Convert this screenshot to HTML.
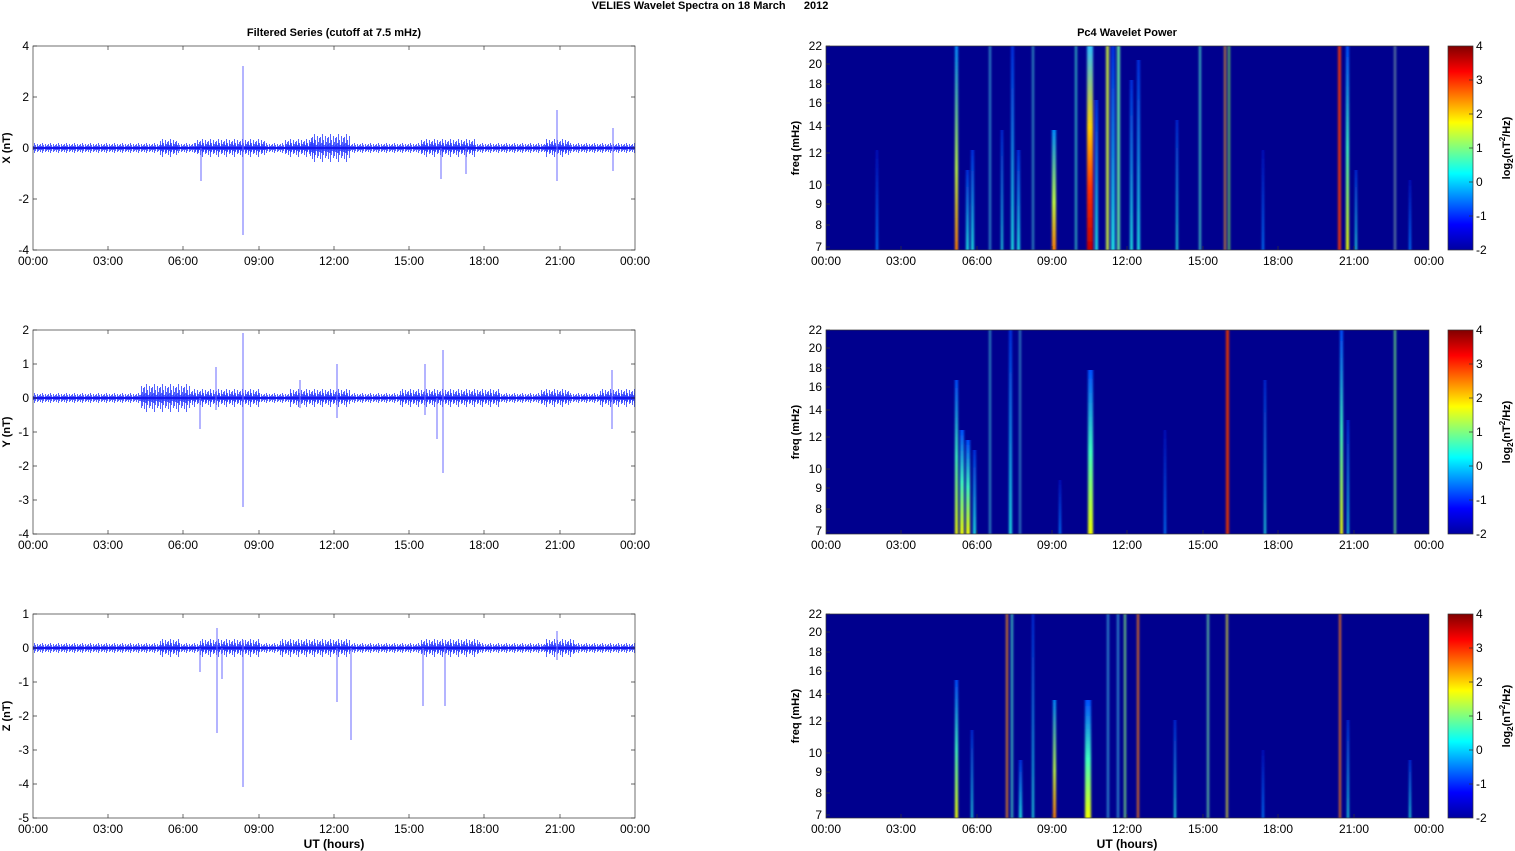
<!DOCTYPE html>
<html><head><meta charset="utf-8"><style>
html,body{margin:0;padding:0;background:#fff;}
svg{display:block;font-family:"Liberation Sans",Arial,sans-serif;}
.t{font-size:12px;fill:#000}
.b{font-size:11px;font-weight:bold;fill:#000}
.ax{stroke:#333;stroke-width:0.7;fill:none}
.sp{stroke:#6a6aff;stroke-width:1}
</style></head><body>
<svg width="1515" height="851" xmlns="http://www.w3.org/2000/svg">
<defs>
<pattern id="nz" x="0" y="-6" width="8" height="12" patternUnits="userSpaceOnUse"><path d="M0.5 2V10M1.5 4V8M2.5 1V11M3.5 3V9M4.5 5V7M5.5 2V10M6.5 4V9M7.5 3V8" stroke="#2a3cff" stroke-width="0.8"/></pattern>
<pattern id="nm" x="0" y="-10" width="8" height="20" patternUnits="userSpaceOnUse"><path d="M0.5 3V17M1.5 7V13M2.5 1V19M3.5 5V14M4.5 8V12M5.5 2V16M6.5 6V15M7.5 4V12" stroke="#2a3cff" stroke-width="0.8"/></pattern>
<pattern id="nb" x="0" y="-15" width="8" height="30" patternUnits="userSpaceOnUse"><path d="M0.5 4V26M1.5 10V20M2.5 1V29M3.5 7V22M4.5 12V18M5.5 3V25M6.5 9V23M7.5 5V19" stroke="#2a3cff" stroke-width="0.8"/></pattern>
<filter id="bl" x="-300%" y="-5%" width="700%" height="110%"><feGaussianBlur stdDeviation="1 0"/></filter>
<linearGradient id="gR" x1="0" y1="1" x2="0" y2="0"><stop offset="0" stop-color="#c00000"/><stop offset="0.3" stop-color="#ff3000"/><stop offset="0.6" stop-color="#ffd000"/><stop offset="1" stop-color="#30c0ff"/></linearGradient>
<linearGradient id="gO" x1="0" y1="1" x2="0" y2="0"><stop offset="0" stop-color="#ff8000"/><stop offset="0.4" stop-color="#c0ff40"/><stop offset="1" stop-color="#0090ff"/></linearGradient>
<linearGradient id="gY" x1="0" y1="1" x2="0" y2="0"><stop offset="0" stop-color="#f0ff00"/><stop offset="0.5" stop-color="#40ffc0"/><stop offset="1" stop-color="#0050ff"/></linearGradient>
<linearGradient id="gC" x1="0" y1="1" x2="0" y2="0"><stop offset="0" stop-color="#20e0e0"/><stop offset="1" stop-color="#0030e0"/></linearGradient>
<linearGradient id="gB" x1="0" y1="1" x2="0" y2="0"><stop offset="0" stop-color="#0080ff"/><stop offset="1" stop-color="#0010c0"/></linearGradient>
<linearGradient id="cb" x1="0" y1="1" x2="0" y2="0"><stop offset="0" stop-color="#0000a0"/><stop offset="0.125" stop-color="#0000ff"/><stop offset="0.375" stop-color="#00ffff"/><stop offset="0.625" stop-color="#ffff00"/><stop offset="0.875" stop-color="#ff0000"/><stop offset="1" stop-color="#800000"/></linearGradient>
</defs>

<text x="710" y="9" class="b" text-anchor="middle" xml:space="preserve">VELIES Wavelet Spectra on 18 March      2012</text>
<text x="334" y="36" class="b" text-anchor="middle">Filtered Series (cutoff at 7.5 mHz)</text>
<text x="1127" y="36" class="b" text-anchor="middle">Pc4 Wavelet Power</text>

<!-- ============ LEFT PLOT 1 ============ -->
<rect x="33" y="46" width="602" height="204" fill="#fff"/>
<g transform="translate(0,148)">
<rect x="33" y="-6" width="602" height="12" fill="url(#nz)"/>
<rect x="160" y="-10" width="18" height="20" fill="url(#nm)"/>
<rect x="195" y="-10" width="70" height="20" fill="url(#nm)"/>
<rect x="285" y="-10" width="30" height="20" fill="url(#nm)"/>
<rect x="310" y="-15" width="40" height="30" fill="url(#nb)"/>
<rect x="420" y="-10" width="55" height="20" fill="url(#nm)"/>
<rect x="545" y="-10" width="25" height="20" fill="url(#nm)"/>
<line x1="33" y1="0" x2="635" y2="0" stroke="#1414ee" stroke-width="2.2"/>
</g>
<line class="sp" x1="243" y1="66" x2="243" y2="235"/>
<line class="sp" x1="201" y1="148" x2="201" y2="181"/>
<line class="sp" x1="557" y1="110" x2="557" y2="181"/>
<line class="sp" x1="613" y1="128" x2="613" y2="171"/>
<line class="sp" x1="441" y1="148" x2="441" y2="179"/>
<line class="sp" x1="466" y1="148" x2="466" y2="174"/>
<rect x="33" y="46" width="602" height="204" class="ax"/>
<path class="ax" d="M33 46h4M631 46h4M33 97h4M631 97h4M33 148h4M631 148h4M33 199h4M631 199h4M33 250h4M631 250h4"/>
<text class="t" x="29" y="50" text-anchor="end">4</text>
<text class="t" x="29" y="101" text-anchor="end">2</text>
<text class="t" x="29" y="152" text-anchor="end">0</text>
<text class="t" x="29" y="203" text-anchor="end">-2</text>
<text class="t" x="29" y="254" text-anchor="end">-4</text>
<text class="b" transform="translate(10,148) rotate(-90)" text-anchor="middle">X (nT)</text>

<!-- ============ LEFT PLOT 2 ============ -->
<rect x="33" y="330" width="602" height="204" fill="#fff"/>
<g transform="translate(0,398)">
<rect x="33" y="-6" width="602" height="12" fill="url(#nz)"/>
<rect x="140" y="-15" width="50" height="30" fill="url(#nb)"/>
<rect x="190" y="-10" width="70" height="20" fill="url(#nm)"/>
<rect x="290" y="-10" width="60" height="20" fill="url(#nm)"/>
<rect x="400" y="-10" width="100" height="20" fill="url(#nm)"/>
<rect x="540" y="-10" width="30" height="20" fill="url(#nm)"/>
<rect x="600" y="-10" width="35" height="20" fill="url(#nm)"/>
<line x1="33" y1="0" x2="635" y2="0" stroke="#1414ee" stroke-width="2.2"/>
</g>
<line class="sp" x1="243" y1="333" x2="243" y2="507"/>
<line class="sp" x1="443" y1="350" x2="443" y2="473"/>
<line class="sp" x1="200" y1="398" x2="200" y2="429"/>
<line class="sp" x1="216" y1="367" x2="216" y2="410"/>
<line class="sp" x1="337" y1="364" x2="337" y2="418"/>
<line class="sp" x1="425" y1="364" x2="425" y2="415"/>
<line class="sp" x1="612" y1="370" x2="612" y2="429"/>
<line class="sp" x1="437" y1="398" x2="437" y2="439"/>
<line class="sp" x1="300" y1="380" x2="300" y2="408"/>
<rect x="33" y="330" width="602" height="204" class="ax"/>
<path class="ax" d="M33 330h4M631 330h4M33 364h4M631 364h4M33 398h4M631 398h4M33 432h4M631 432h4M33 466h4M631 466h4M33 500h4M631 500h4M33 534h4M631 534h4"/>
<text class="t" x="29" y="334" text-anchor="end">2</text>
<text class="t" x="29" y="368" text-anchor="end">1</text>
<text class="t" x="29" y="402" text-anchor="end">0</text>
<text class="t" x="29" y="436" text-anchor="end">-1</text>
<text class="t" x="29" y="470" text-anchor="end">-2</text>
<text class="t" x="29" y="504" text-anchor="end">-3</text>
<text class="t" x="29" y="538" text-anchor="end">-4</text>
<text class="b" transform="translate(10,432) rotate(-90)" text-anchor="middle">Y (nT)</text>

<!-- ============ LEFT PLOT 3 ============ -->
<rect x="33" y="614" width="602" height="204" fill="#fff"/>
<g transform="translate(0,648)">
<rect x="33" y="-6" width="602" height="12" fill="url(#nz)"/>
<rect x="160" y="-10" width="20" height="20" fill="url(#nm)"/>
<rect x="200" y="-10" width="60" height="20" fill="url(#nm)"/>
<rect x="280" y="-10" width="70" height="20" fill="url(#nm)"/>
<rect x="420" y="-10" width="60" height="20" fill="url(#nm)"/>
<rect x="545" y="-10" width="30" height="20" fill="url(#nm)"/>
<line x1="33" y1="0" x2="635" y2="0" stroke="#1414ee" stroke-width="2.2"/>
</g>
<line class="sp" x1="243" y1="640" x2="243" y2="787"/>
<line class="sp" x1="217" y1="628" x2="217" y2="733"/>
<line class="sp" x1="222" y1="648" x2="222" y2="679"/>
<line class="sp" x1="337" y1="648" x2="337" y2="702"/>
<line class="sp" x1="351" y1="648" x2="351" y2="740"/>
<line class="sp" x1="423" y1="648" x2="423" y2="706"/>
<line class="sp" x1="445" y1="648" x2="445" y2="706"/>
<line class="sp" x1="557" y1="631" x2="557" y2="660"/>
<line class="sp" x1="200" y1="648" x2="200" y2="672"/>
<rect x="33" y="614" width="602" height="204" class="ax"/>
<path class="ax" d="M33 614h4M631 614h4M33 648h4M631 648h4M33 682h4M631 682h4M33 716h4M631 716h4M33 750h4M631 750h4M33 784h4M631 784h4M33 818h4M631 818h4"/>
<text class="t" x="29" y="618" text-anchor="end">1</text>
<text class="t" x="29" y="652" text-anchor="end">0</text>
<text class="t" x="29" y="686" text-anchor="end">-1</text>
<text class="t" x="29" y="720" text-anchor="end">-2</text>
<text class="t" x="29" y="754" text-anchor="end">-3</text>
<text class="t" x="29" y="788" text-anchor="end">-4</text>
<text class="t" x="29" y="822" text-anchor="end">-5</text>
<text class="b" transform="translate(10,716) rotate(-90)" text-anchor="middle">Z (nT)</text>

<!-- left x ticks -->
<path class="ax" d="M108 46v4M183 46v4M259 46v4M334 46v4M409 46v4M484 46v4M560 46v4M108 250v-4M183 250v-4M259 250v-4M334 250v-4M409 250v-4M484 250v-4M560 250v-4
M108 330v4M183 330v4M259 330v4M334 330v4M409 330v4M484 330v4M560 330v4M108 534v-4M183 534v-4M259 534v-4M334 534v-4M409 534v-4M484 534v-4M560 534v-4
M108 614v4M183 614v4M259 614v4M334 614v4M409 614v4M484 614v4M560 614v4M108 818v-4M183 818v-4M259 818v-4M334 818v-4M409 818v-4M484 818v-4M560 818v-4"/>
<g class="t" text-anchor="middle">
<text x="33" y="265">00:00</text><text x="108" y="265">03:00</text><text x="183" y="265">06:00</text><text x="259" y="265">09:00</text><text x="334" y="265">12:00</text><text x="409" y="265">15:00</text><text x="484" y="265">18:00</text><text x="560" y="265">21:00</text><text x="635" y="265">00:00</text>
<text x="33" y="549">00:00</text><text x="108" y="549">03:00</text><text x="183" y="549">06:00</text><text x="259" y="549">09:00</text><text x="334" y="549">12:00</text><text x="409" y="549">15:00</text><text x="484" y="549">18:00</text><text x="560" y="549">21:00</text><text x="635" y="549">00:00</text>
<text x="33" y="833">00:00</text><text x="108" y="833">03:00</text><text x="183" y="833">06:00</text><text x="259" y="833">09:00</text><text x="334" y="833">12:00</text><text x="409" y="833">15:00</text><text x="484" y="833">18:00</text><text x="560" y="833">21:00</text><text x="635" y="833">00:00</text>
<text x="826" y="265">00:00</text><text x="901" y="265">03:00</text><text x="977" y="265">06:00</text><text x="1052" y="265">09:00</text><text x="1127" y="265">12:00</text><text x="1203" y="265">15:00</text><text x="1278" y="265">18:00</text><text x="1354" y="265">21:00</text><text x="1429" y="265">00:00</text>
<text x="826" y="549">00:00</text><text x="901" y="549">03:00</text><text x="977" y="549">06:00</text><text x="1052" y="549">09:00</text><text x="1127" y="549">12:00</text><text x="1203" y="549">15:00</text><text x="1278" y="549">18:00</text><text x="1354" y="549">21:00</text><text x="1429" y="549">00:00</text>
<text x="826" y="833">00:00</text><text x="901" y="833">03:00</text><text x="977" y="833">06:00</text><text x="1052" y="833">09:00</text><text x="1127" y="833">12:00</text><text x="1203" y="833">15:00</text><text x="1278" y="833">18:00</text><text x="1354" y="833">21:00</text><text x="1429" y="833">00:00</text>
</g>
<text x="334" y="848" class="b" style="font-size:12px" text-anchor="middle">UT (hours)</text>
<text x="1127" y="848" class="b" style="font-size:12px" text-anchor="middle">UT (hours)</text>

<!-- ============ SPECTROGRAM 1 ============ -->
<rect x="826" y="46" width="603" height="204" fill="#00008e"/>
<g filter="url(#bl)">
<rect x="876" y="150" width="2" height="100" fill="url(#gB)"/>
<rect x="955" y="46" width="3" height="204" fill="url(#gO)"/>
<rect x="966" y="170" width="3" height="80" fill="url(#gC)"/>
<rect x="971" y="150" width="3" height="100" fill="url(#gC)"/>
<rect x="989" y="46" width="2" height="204" fill="#3090c8"/>
<rect x="1001" y="130" width="2" height="120" fill="url(#gC)"/>
<rect x="1011" y="46" width="3" height="204" fill="url(#gC)"/>
<rect x="1017" y="150" width="3" height="100" fill="url(#gC)"/>
<rect x="1032" y="46" width="2" height="204" fill="#3090c0"/>
<rect x="1052" y="130" width="4" height="120" fill="url(#gO)"/>
<rect x="1075" y="46" width="2" height="204" fill="#30b0c0"/>
<rect x="1087" y="46" width="6" height="204" fill="url(#gR)"/>
<rect x="1095" y="100" width="3" height="150" fill="url(#gC)"/>
<rect x="1106" y="46" width="3" height="204" fill="#c0e040"/>
<rect x="1111" y="46" width="4" height="204" fill="url(#gC)"/>
<rect x="1117" y="46" width="3" height="204" fill="#60e0a0"/>
<rect x="1130" y="80" width="3" height="170" fill="url(#gC)"/>
<rect x="1137" y="60" width="3" height="190" fill="url(#gC)"/>
<rect x="1176" y="120" width="2" height="130" fill="url(#gC)"/>
<rect x="1199" y="46" width="2" height="204" fill="#40c0c0"/>
<rect x="1224" y="46" width="2" height="204" fill="#c08040"/>
<rect x="1228" y="46" width="2" height="204" fill="#60c060"/>
<rect x="1262" y="150" width="2" height="100" fill="url(#gB)"/>
<rect x="1338" y="46" width="3" height="204" fill="#e03010"/>
<rect x="1346" y="46" width="3" height="204" fill="url(#gY)"/>
<rect x="1355" y="170" width="2" height="80" fill="url(#gC)"/>
<rect x="1394" y="46" width="2" height="204" fill="#6080a0"/>
<rect x="1409" y="180" width="2" height="70" fill="url(#gB)"/>
</g>
<rect x="826" y="46" width="603" height="204" class="ax"/>

<!-- ============ SPECTROGRAM 2 ============ -->
<rect x="826" y="330" width="603" height="204" fill="#00008e"/>
<g filter="url(#bl)">
<rect x="955" y="380" width="3" height="154" fill="url(#gY)"/>
<rect x="960" y="430" width="4" height="104" fill="url(#gY)"/>
<rect x="966" y="440" width="4" height="94" fill="url(#gY)"/>
<rect x="973" y="450" width="3" height="84" fill="url(#gC)"/>
<rect x="989" y="330" width="2" height="204" fill="#3090c0"/>
<rect x="1009" y="330" width="3" height="204" fill="url(#gC)"/>
<rect x="1019" y="330" width="2" height="204" fill="#3080c0"/>
<rect x="1059" y="480" width="2" height="54" fill="url(#gB)"/>
<rect x="1088" y="370" width="5" height="164" fill="url(#gY)"/>
<rect x="1164" y="430" width="2" height="104" fill="url(#gB)"/>
<rect x="1226" y="330" width="3" height="204" fill="#e03000"/>
<rect x="1264" y="380" width="2" height="154" fill="url(#gC)"/>
<rect x="1340" y="330" width="3" height="204" fill="url(#gY)"/>
<rect x="1347" y="420" width="2" height="114" fill="url(#gC)"/>
<rect x="1394" y="330" width="2" height="204" fill="#60d080"/>
</g>
<rect x="826" y="330" width="603" height="204" class="ax"/>

<!-- ============ SPECTROGRAM 3 ============ -->
<rect x="826" y="614" width="603" height="204" fill="#00008e"/>
<g filter="url(#bl)">
<rect x="955" y="680" width="3" height="138" fill="url(#gY)"/>
<rect x="971" y="730" width="2" height="88" fill="url(#gC)"/>
<rect x="1006" y="614" width="2" height="204" fill="#e08020"/>
<rect x="1011" y="614" width="2" height="204" fill="#40c0c0"/>
<rect x="1019" y="760" width="3" height="58" fill="url(#gC)"/>
<rect x="1032" y="614" width="2" height="204" fill="url(#gC)"/>
<rect x="1053" y="700" width="3" height="118" fill="url(#gO)"/>
<rect x="1085" y="700" width="6" height="118" fill="url(#gY)"/>
<rect x="1107" y="614" width="2" height="204" fill="#3090d0"/>
<rect x="1117" y="614" width="2" height="204" fill="#3090d0"/>
<rect x="1124" y="614" width="2" height="204" fill="#70d080"/>
<rect x="1137" y="614" width="2" height="204" fill="#e07020"/>
<rect x="1174" y="720" width="2" height="98" fill="url(#gC)"/>
<rect x="1207" y="614" width="2" height="204" fill="#60c0a0"/>
<rect x="1226" y="614" width="2" height="204" fill="#c0c040"/>
<rect x="1262" y="750" width="2" height="68" fill="url(#gB)"/>
<rect x="1339" y="614" width="2" height="204" fill="#e07020"/>
<rect x="1347" y="720" width="2" height="98" fill="url(#gC)"/>
<rect x="1409" y="760" width="2" height="58" fill="url(#gC)"/>
</g>
<rect x="826" y="614" width="603" height="204" class="ax"/>

<!-- freq ticks & labels -->
<g id="fq">
<path class="ax" d="M826 46h4M826 64h4M826 84h4M826 103h4M826 126h4M826 153h4M826 185h4M826 204h4M826 225h4M826 247h4"/>
<g class="t" text-anchor="end">
<text x="822" y="50">22</text><text x="822" y="68">20</text><text x="822" y="88">18</text><text x="822" y="107">16</text><text x="822" y="130">14</text><text x="822" y="157">12</text><text x="822" y="189">10</text><text x="822" y="208">9</text><text x="822" y="229">8</text><text x="822" y="251">7</text>
</g>
<text class="b" transform="translate(799,148) rotate(-90)" text-anchor="middle">freq (mHz)</text>
</g>
<g transform="translate(0,284)">
<path class="ax" d="M826 46h4M826 64h4M826 84h4M826 103h4M826 126h4M826 153h4M826 185h4M826 204h4M826 225h4M826 247h4"/>
<g class="t" text-anchor="end">
<text x="822" y="50">22</text><text x="822" y="68">20</text><text x="822" y="88">18</text><text x="822" y="107">16</text><text x="822" y="130">14</text><text x="822" y="157">12</text><text x="822" y="189">10</text><text x="822" y="208">9</text><text x="822" y="229">8</text><text x="822" y="251">7</text>
</g>
<text class="b" transform="translate(799,148) rotate(-90)" text-anchor="middle">freq (mHz)</text>
</g>
<g transform="translate(0,568)">
<path class="ax" d="M826 46h4M826 64h4M826 84h4M826 103h4M826 126h4M826 153h4M826 185h4M826 204h4M826 225h4M826 247h4"/>
<g class="t" text-anchor="end">
<text x="822" y="50">22</text><text x="822" y="68">20</text><text x="822" y="88">18</text><text x="822" y="107">16</text><text x="822" y="130">14</text><text x="822" y="157">12</text><text x="822" y="189">10</text><text x="822" y="208">9</text><text x="822" y="229">8</text><text x="822" y="251">7</text>
</g>
<text class="b" transform="translate(799,148) rotate(-90)" text-anchor="middle">freq (mHz)</text>
</g>

<!-- right x ticks -->
<path class="ax" d="M901 250v-4M977 250v-4M1052 250v-4M1127 250v-4M1203 250v-4M1278 250v-4M1354 250v-4M901 534v-4M977 534v-4M1052 534v-4M1127 534v-4M1203 534v-4M1278 534v-4M1354 534v-4M901 818v-4M977 818v-4M1052 818v-4M1127 818v-4M1203 818v-4M1278 818v-4M1354 818v-4"/>

<!-- colorbars -->
<g>
<rect x="1448" y="46" width="25" height="204" fill="url(#cb)" class="ax" style="fill:url(#cb)"/>
<path class="ax" d="M1469 80h4M1469 114h4M1469 148h4M1469 182h4M1469 216h4"/>
<g class="t"><text x="1476" y="50">4</text><text x="1476" y="84">3</text><text x="1476" y="118">2</text><text x="1476" y="152">1</text><text x="1476" y="186">0</text><text x="1476" y="220">-1</text><text x="1476" y="254">-2</text></g>
<text class="b" transform="translate(1510,148) rotate(-90)" text-anchor="middle">log<tspan font-size="8" dy="3">2</tspan><tspan dy="-3">(nT</tspan><tspan font-size="8" dy="-5">2</tspan><tspan dy="5">/Hz)</tspan></text>
</g>
<g transform="translate(0,284)">
<rect x="1448" y="46" width="25" height="204" class="ax" style="fill:url(#cb)"/>
<path class="ax" d="M1469 80h4M1469 114h4M1469 148h4M1469 182h4M1469 216h4"/>
<g class="t"><text x="1476" y="50">4</text><text x="1476" y="84">3</text><text x="1476" y="118">2</text><text x="1476" y="152">1</text><text x="1476" y="186">0</text><text x="1476" y="220">-1</text><text x="1476" y="254">-2</text></g>
<text class="b" transform="translate(1510,148) rotate(-90)" text-anchor="middle">log<tspan font-size="8" dy="3">2</tspan><tspan dy="-3">(nT</tspan><tspan font-size="8" dy="-5">2</tspan><tspan dy="5">/Hz)</tspan></text>
</g>
<g transform="translate(0,568)">
<rect x="1448" y="46" width="25" height="204" class="ax" style="fill:url(#cb)"/>
<path class="ax" d="M1469 80h4M1469 114h4M1469 148h4M1469 182h4M1469 216h4"/>
<g class="t"><text x="1476" y="50">4</text><text x="1476" y="84">3</text><text x="1476" y="118">2</text><text x="1476" y="152">1</text><text x="1476" y="186">0</text><text x="1476" y="220">-1</text><text x="1476" y="254">-2</text></g>
<text class="b" transform="translate(1510,148) rotate(-90)" text-anchor="middle">log<tspan font-size="8" dy="3">2</tspan><tspan dy="-3">(nT</tspan><tspan font-size="8" dy="-5">2</tspan><tspan dy="5">/Hz)</tspan></text>
</g>
</svg>
</body></html>
